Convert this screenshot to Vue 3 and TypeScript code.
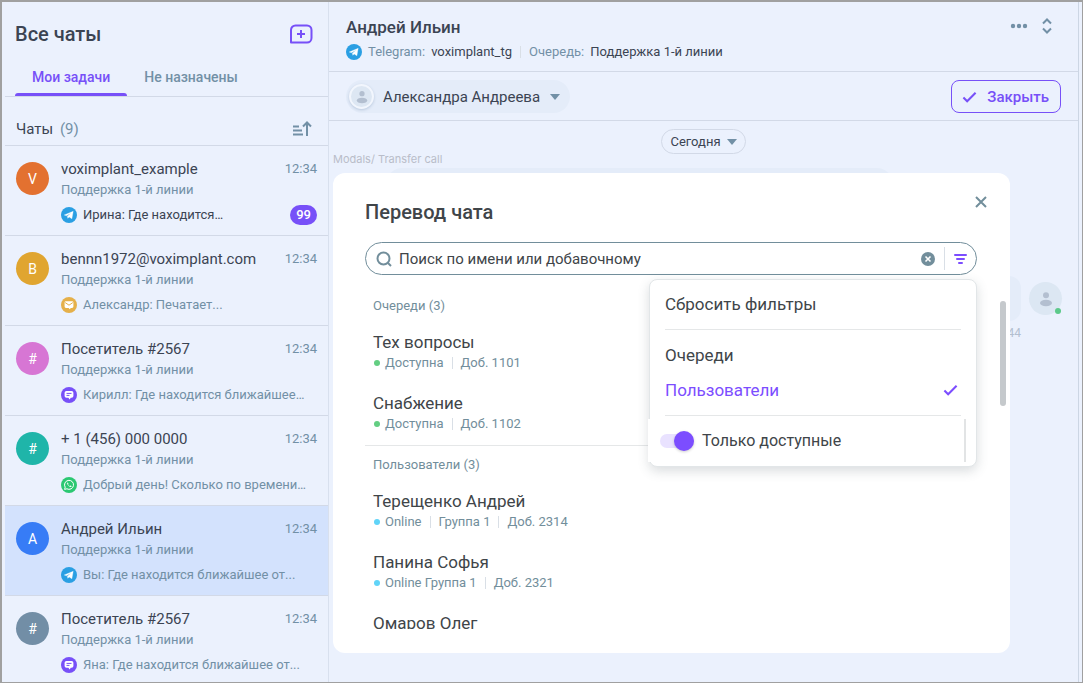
<script setup lang="ts">
import { ref } from 'vue'

type Channel = 'telegram' | 'mail' | 'web' | 'whatsapp'

interface Chat {
  id: number
  letter: string
  tone: string
  name: string
  channel: Channel
  message: string
  unread?: number
  active?: boolean
}

interface Entry {
  name: string
  tone: string
  meta: string[]
}

interface Section {
  title: string
  entries: Entry[]
}

const chats: Chat[] = [
  { id: 1, letter: 'V', tone: 'orange', name: 'voximplant_example', channel: 'telegram', message: 'Ирина: Где находится…', unread: 99 },
  { id: 2, letter: 'B', tone: 'amber', name: 'bennn1972@voximplant.com', channel: 'mail', message: 'Александр: Печатает...' },
  { id: 3, letter: '#', tone: 'pink', name: 'Посетитель #2567', channel: 'web', message: 'Кирилл: Где находится ближайшее…' },
  { id: 4, letter: '#', tone: 'teal', name: '+ 1 (456) 000 0000', channel: 'whatsapp', message: 'Добрый день! Сколько по времени…' },
  { id: 5, letter: 'A', tone: 'blue', name: 'Андрей Ильин', channel: 'telegram', message: 'Вы: Где находится ближайшее от...', active: true },
  { id: 6, letter: '#', tone: 'slate', name: 'Посетитель #2567', channel: 'web', message: 'Яна: Где находится ближайшее от...' },
]

const sections: Section[] = [
  {
    title: 'Очереди (3)',
    entries: [
      { name: 'Тех вопросы', tone: 'green', meta: ['Доступна', 'Доб. 1101'] },
      { name: 'Снабжение', tone: 'green', meta: ['Доступна', 'Доб. 1102'] },
    ],
  },
  {
    title: 'Пользователи (3)',
    entries: [
      { name: 'Терещенко Андрей', tone: 'cyan', meta: ['Online', 'Группа 1', 'Доб. 2314'] },
      { name: 'Панина Софья', tone: 'cyan', meta: ['Online Группа 1', 'Доб. 2321'] },
      { name: 'Омаров Олег', tone: 'cyan', meta: [] },
    ],
  },
]

const query = ref('')
const onlyAvailable = ref(true)
</script>

<template>
  <div class="frame">
    <svg class="defs" width="0" height="0" aria-hidden="true">
      <symbol id="telegram" viewBox="0 0 16 16">
        <circle cx="8" cy="8" r="8" fill="#2a9fe3" />
        <path d="M3.2 8 12.2 4.3 10.9 11.8 8.1 9.9 6.8 11.3 6.4 9.2 10.2 6 5.4 8.8Z" fill="#fff" stroke="#fff" stroke-width=".3" stroke-linejoin="round" />
      </symbol>
      <symbol id="mail" viewBox="0 0 16 16">
        <circle cx="8" cy="8" r="8" fill="#e5b04a" />
        <path d="M5 4.2H11A1.4 1.4 0 0 1 12.4 5.6V9.6A1.4 1.4 0 0 1 11 11H9.8L8.8 12.3 7.6 11H5A1.4 1.4 0 0 1 3.6 9.6V5.6A1.4 1.4 0 0 1 5 4.2Z" fill="#fff" />
        <path d="M4.2 5.6 8 8.2 11.8 5.6" fill="none" stroke="#e5b04a" stroke-width="1" />
      </symbol>
      <symbol id="web" viewBox="0 0 16 16">
        <circle cx="8" cy="8" r="8" fill="#7750f8" />
        <path d="M5.4 4H10.6A1.8 1.8 0 0 1 12.4 5.8V9A1.8 1.8 0 0 1 10.6 10.8H9.8L8.6 12.6 7.4 10.8H5.4A1.8 1.8 0 0 1 3.6 9V5.8A1.8 1.8 0 0 1 5.4 4Z" fill="#fff" />
        <path d="M5.5 6.4H10.5M5.5 8.4H8.5" stroke="#7750f8" stroke-width="1" />
      </symbol>
      <symbol id="whatsapp" viewBox="0 0 16 16">
        <circle cx="8" cy="8" r="8" fill="#2bc872" />
        <path d="M3.6 12.4 4.2 10.2A4.5 4.5 0 1 1 5.9 11.8Z" fill="none" stroke="#fff" stroke-width="1" stroke-linejoin="round" />
        <path d="M6.4 5.6C5.4 6.8 7.6 9.8 9.6 10.1 10.5 10 10.6 9.4 10.5 9L9.3 8.4 8.7 9C7.9 8.7 7.4 8.2 7.1 7.4L7.5 6.9 7 5.7Z" fill="#fff" />
      </symbol>
      <symbol id="person" viewBox="0 0 16 16">
        <circle cx="8" cy="4.2" r="3" />
        <ellipse cx="8" cy="12" rx="6" ry="3.2" />
      </symbol>
      <symbol id="check" viewBox="0 0 16 12">
        <path d="M1.5 6.5 5.5 10.5 14.5 1.5" fill="none" stroke="currentColor" stroke-width="2.2" />
      </symbol>
    </svg>

    <aside class="sidebar">
      <header class="side-head">
        <h1>Все чаты</h1>
        <button class="icon-btn" type="button" aria-label="Новый чат">
          <svg width="24" height="20" viewBox="0 0 24 20" fill="none" stroke="#7750f8" stroke-width="2">
            <path d="M2 18.500V6A4.500 4.500 0 0 1 6.500 1.500H18A4.500 4.500 0 0 1 22.500 6V14A4.500 4.500 0 0 1 18 18.500Z" stroke-linejoin="round" />
            <path d="M12 6V14M8 10H16" />
          </svg>
        </button>
      </header>
      <nav class="tabs">
        <button class="tab current" type="button">Мои задачи</button>
        <button class="tab" type="button">Не назначены</button>
      </nav>
      <div class="list-head">
        <span>Чаты <span class="count">(9)</span></span>
        <button class="icon-btn" type="button" aria-label="Сортировка">
          <svg width="20" height="16" viewBox="0 0 20 16" fill="none" stroke="#7290a6" stroke-width="2">
            <path d="M1 5.500H7M1 9.500H10M1 13.500H11M15 15V2M11 5.500 15 1.500 19 5.500" />
          </svg>
        </button>
      </div>
      <ul class="chats">
        <li v-for="chat in chats" :key="chat.id" class="chat" :class="{ active: chat.active }">
          <span class="avatar" :class="chat.tone">{{ chat.letter }}</span>
          <div class="chat-body">
            <div class="chat-top">
              <span class="chat-name">{{ chat.name }}</span>
              <time>12:34</time>
            </div>
            <div class="chat-queue">Поддержка 1-й линии</div>
            <div class="chat-last" :class="{ fresh: chat.unread }">
              <svg width="16" height="16"><use :href="'#' + chat.channel" /></svg>
              <span class="chat-text">{{ chat.message }}</span>
              <span v-if="chat.unread" class="badge">{{ chat.unread }}</span>
            </div>
          </div>
        </li>
      </ul>
    </aside>

    <main class="main">
      <header class="main-head">
        <div>
          <h2>Андрей Ильин</h2>
          <div class="source">
            <svg width="16" height="16"><use href="#telegram" /></svg>
            <span class="muted">Telegram:</span>
            <span>voximplant_tg</span>
            <i class="bar"></i>
            <span class="muted">Очередь:</span>
            <span>Поддержка 1-й линии</span>
          </div>
        </div>
        <div class="head-actions">
          <button class="icon-btn" type="button" aria-label="Ещё">
            <svg width="18" height="6" viewBox="0 0 18 6" fill="#7290a6">
              <circle cx="3" cy="3" r="2.200" /><circle cx="9" cy="3" r="2.200" /><circle cx="15" cy="3" r="2.200" />
            </svg>
          </button>
          <button class="icon-btn" type="button" aria-label="Развернуть">
            <svg width="10" height="16" viewBox="0 0 10 16" fill="none" stroke="#7290a6" stroke-width="2">
              <path d="M1 5.500 5 1.500 9 5.500M1 10.500 5 14.500 9 10.500" />
            </svg>
          </button>
        </div>
      </header>

      <div class="agent-bar">
        <button class="agent" type="button">
          <span class="agent-pic"><svg width="14" height="14"><use href="#person" /></svg></span>
          Александра Андреева
          <i class="caret"></i>
        </button>
        <button class="close-chat" type="button">
          <svg width="15" height="12"><use href="#check" /></svg>
          Закрыть
        </button>
      </div>

      <section class="talk">
        <button class="day" type="button">Сегодня <i class="caret"></i></button>
        <span class="caption">Modals/ Transfer call</span>
        <div class="bubble-in"></div>
        <div class="bubble-out"></div>
        <time class="sent">12:44</time>
        <span class="me"><svg width="16" height="16"><use href="#person" /></svg></span>

        <div class="modal" role="dialog" aria-labelledby="modal-title">
          <header class="modal-head">
            <h2 id="modal-title">Перевод чата</h2>
            <button class="icon-btn" type="button" aria-label="Закрыть окно">
              <svg width="12" height="12" viewBox="0 0 12 12" stroke="#728e9b" stroke-width="2">
                <path d="M1 1 11 11M11 1 1 11" />
              </svg>
            </button>
          </header>

          <div class="search">
            <svg width="16" height="16" viewBox="0 0 16 16" fill="none" stroke="#728e9b" stroke-width="2">
              <circle cx="7.500" cy="7.500" r="6" /><path d="M11.500 11.500 15 15" />
            </svg>
            <input v-model="query" type="text" placeholder="Поиск по имени или добавочному" aria-label="Поиск по имени или добавочному" />
            <button class="icon-btn" type="button" aria-label="Очистить" @click="query = ''">
              <svg width="14" height="14" viewBox="0 0 14 14">
                <circle cx="7" cy="7" r="7" fill="#728e9b" />
                <path d="M4.500 4.500 9.500 9.500M9.500 4.500 4.500 9.500" stroke="#fff" stroke-width="1.600" />
              </svg>
            </button>
            <i class="bar tall"></i>
            <button class="icon-btn" type="button" aria-label="Фильтры">
              <svg width="13" height="12" viewBox="0 0 13 12" stroke="#7c4dff" stroke-width="2" stroke-linecap="round">
                <path d="M1 2H12M3 6H10M5 10H8" />
              </svg>
            </button>

            <div class="menu">
              <button class="option" type="button">Сбросить фильтры</button>
              <hr />
              <button class="option" type="button">Очереди</button>
              <button class="option chosen" type="button">
                Пользователи
                <svg width="15" height="12"><use href="#check" /></svg>
              </button>
              <hr class="last" />
              <label class="switch">
                <input v-model="onlyAvailable" type="checkbox" />
                Только доступные
              </label>
            </div>
          </div>

          <div class="results">
            <section v-for="section in sections" :key="section.title" class="group">
              <h3>{{ section.title }}</h3>
              <div v-for="entry in section.entries" :key="entry.name" class="entry">
                <div class="entry-name">{{ entry.name }}</div>
                <div v-if="entry.meta.length" class="entry-meta">
                  <i class="dot" :class="entry.tone"></i>
                  <template v-for="(part, index) in entry.meta" :key="part">
                    <i v-if="index" class="bar"></i>
                    <span>{{ part }}</span>
                  </template>
                </div>
              </div>
            </section>
          </div>
          <i class="scroll"></i>
        </div>
      </section>
    </main>
  </div>
</template>

<style>
body {
  margin: 0;
}
</style>

<style scoped>
* {
  box-sizing: border-box;
}

.frame {
  display: flex;
  height: 100vh;
  padding: 0 3px;
  border: 2px solid #a0a0a0;
  border-right-width: 1px;
  border-bottom-width: 1px;
  background: #ebf1fd;
  color: #3b4453;
  font-family: Roboto, "Noto Sans", sans-serif;
  font-size: 14px;
  overflow: hidden;
}

.defs {
  position: absolute;
}

h1,
h2,
h3,
ul {
  margin: 0;
  padding: 0;
}

h1,
h2 {
  font-weight: 500;
}

button {
  display: flex;
  align-items: center;
  margin: 0;
  padding: 0;
  border: 0;
  background: none;
  color: inherit;
  font: inherit;
  cursor: pointer;
}

svg {
  flex: none;
  display: block;
}

.sidebar {
  flex: none;
  display: flex;
  flex-direction: column;
  width: 324px;
  border-right: 1px solid #d8e0ee;
}

.side-head {
  display: flex;
  align-items: center;
  justify-content: space-between;
  height: 63px;
  padding: 0 15px 0 10px;
}

h1 {
  font-size: 20px;
  line-height: 28px;
}

.tabs {
  display: flex;
  height: 32px;
  padding: 0 10px;
  border-bottom: 1px solid #d2d9e7;
}

.tab {
  position: relative;
  padding: 0 17px 7px;
  color: #7290a6;
  font-size: 14px;
  font-weight: 500;
  line-height: 24px;
}

.tab.current {
  color: #7750f8;
}

.tab.current::after {
  content: "";
  position: absolute;
  right: 0;
  bottom: 0;
  left: 0;
  height: 3px;
  border-radius: 3px 3px 0 0;
  background: #7750f8;
}

.list-head {
  display: flex;
  align-items: center;
  justify-content: space-between;
  height: 49px;
  padding: 16px 16px 0 11px;
  border-bottom: 1px solid #d2d9e7;
  font-size: 15px;
}

.count {
  margin-left: 3px;
  color: #7290a6;
}

.chats {
  flex: 1;
  min-height: 0;
  overflow: hidden;
  list-style: none;
}

.chat {
  display: flex;
  gap: 12px;
  height: 90px;
  padding: 13px 11px 0;
  border-bottom: 1px solid #d2d9e7;
}

.chat.active {
  background: #d3e2fd;
}

.avatar {
  flex: none;
  display: grid;
  place-items: center;
  width: 33px;
  height: 33px;
  margin-top: 3px;
  border-radius: 50%;
  color: #fff;
  font-size: 14px;
}

.orange { background: #e37130; }
.amber { background: #e0a530; }
.pink { background: #d776d4; }
.teal { background: #1fb5a9; }
.blue { background: #377cf6; }
.slate { background: #728ea6; }

.chat-body {
  flex: 1;
  min-width: 0;
}

.chat-top {
  display: flex;
  justify-content: space-between;
  line-height: 20px;
}

.chat-name {
  font-size: 15px;
}

time {
  color: #7290a6;
  font-size: 13px;
}

.chat-queue {
  margin-top: 1px;
  color: #7290a6;
  font-size: 13px;
  line-height: 20px;
}

.chat-last {
  display: flex;
  align-items: center;
  gap: 6px;
  margin-top: 5px;
  color: #7290a6;
  font-size: 13px;
  line-height: 20px;
}

.chat-last.fresh {
  color: #3b4453;
}

.chat-text {
  flex: 1;
  overflow: hidden;
  white-space: nowrap;
}

.badge {
  padding: 0 6px;
  border-radius: 10px;
  background: #7750f8;
  color: #fff;
  font-weight: 500;
}

.main {
  flex: 1;
  display: flex;
  flex-direction: column;
  min-width: 0;
  border-right: 1px solid #ccd6e4;
}

.main-head {
  display: flex;
  align-items: flex-start;
  justify-content: space-between;
  height: 70px;
  padding: 13px 26px 0 17px;
  border-bottom: 1px solid #d2d9e7;
}

.main-head h2 {
  font-size: 17px;
  line-height: 24px;
}

.source {
  display: flex;
  align-items: center;
  gap: 6px;
  font-size: 13px;
  line-height: 26px;
}

.muted {
  color: #7290a6;
}

.bar {
  width: 1px;
  height: 12px;
  margin: 0 2px;
  background: #d9dfe6;
}

.head-actions {
  display: flex;
  align-items: center;
  gap: 14px;
  height: 22px;
}

.agent-bar {
  display: flex;
  align-items: center;
  justify-content: space-between;
  height: 49px;
  padding: 1px 17px 0 17px;
  border-bottom: 1px solid #d2d9e7;
}

.agent {
  gap: 9px;
  height: 33px;
  padding: 0 10px 0 3px;
  border-radius: 17px;
  background: #e4ecf9;
  font-size: 15px;
}

.agent-pic {
  display: grid;
  place-items: center;
  width: 25px;
  height: 25px;
  border: 2px solid #f2f6fd;
  border-radius: 50%;
  background: #dde7f3;
  box-shadow: 0 1px 3px #b9c8dd;
  fill: #b3bfd0;
}

.caret {
  width: 0;
  margin-left: 1px;
  border: 5px solid transparent;
  border-top: 6px solid #7290a6;
  border-bottom: 0;
}

.close-chat {
  gap: 10px;
  height: 33px;
  padding: 0 11px 0 10px;
  border: 1px solid #7750f8;
  border-radius: 8px;
  color: #7750f8;
  font-size: 15px;
  font-weight: 500;
}

.talk {
  flex: 1;
  position: relative;
  min-height: 0;
}

.day {
  gap: 5px;
  height: 25px;
  margin: 8px auto 0;
  padding: 0 8px;
  border: 1px solid #d2d9e7;
  border-radius: 13px;
  font-size: 13px;
}

.caption {
  position: absolute;
  top: 31px;
  left: 4px;
  color: #b9bdc9;
  font-family: Inter, sans-serif;
  font-size: 11px;
  line-height: 14px;
}

.bubble-in {
  position: absolute;
  top: 47px;
  right: 185px;
  left: 57px;
  height: 40px;
  border-radius: 16px;
  background: #e4ecf9;
}

.bubble-out {
  position: absolute;
  top: 155px;
  right: 57px;
  width: 100px;
  height: 45px;
  border-radius: 12px;
  background: #e4ecf9;
}

.sent {
  position: absolute;
  top: 205px;
  right: 57px;
  color: #b3bfd0;
  font-size: 12px;
}

.me {
  position: absolute;
  top: 161px;
  right: 16px;
  display: grid;
  place-items: center;
  width: 33px;
  height: 33px;
  border-radius: 50%;
  background: #dce7f3;
  fill: #b3bfd0;
}

.me::after {
  content: "";
  position: absolute;
  right: 1px;
  bottom: 1px;
  width: 6px;
  height: 6px;
  border-radius: 50%;
  background: #5cc98a;
}

.modal {
  position: absolute;
  top: 52px;
  right: 68px;
  bottom: 29px;
  left: 4px;
  display: flex;
  flex-direction: column;
  padding: 22px 33px 24px 32px;
  border-radius: 12px;
  background: #fff;
  color: #404549;
}

.modal-head {
  display: flex;
  align-items: flex-start;
  justify-content: space-between;
  margin-right: -10px;
  margin-bottom: 13px;
}

.modal-head h2 {
  font-size: 20px;
  line-height: 34px;
}

.modal-head .icon-btn {
  padding: 1px 0;
}

.search {
  position: relative;
  display: flex;
  align-items: center;
  gap: 7px;
  height: 33px;
  padding: 0 9px 0 10px;
  border: 1px solid #728e9b;
  border-radius: 17px;
}

.search input[type="text"] {
  flex: 1;
  min-width: 0;
  padding: 0;
  border: 0;
  outline: 0;
  background: none;
  color: #404549;
  font: inherit;
  font-size: 15px;
}

.search input::placeholder {
  color: #404549;
  opacity: 1;
}

.bar.tall {
  height: 23px;
}

.menu {
  position: absolute;
  top: 36px;
  right: -1px;
  z-index: 1;
  width: 328px;
  padding: 7px 15px 4px;
  border: 1px solid #e2e6e8;
  border-radius: 8px;
  background: #fff;
  box-shadow: 0 4px 12px #404f5a33;
  font-size: 17px;
}

.option {
  justify-content: space-between;
  width: 100%;
  height: 35px;
  padding: 0 3px 2px 0;
}

.option.chosen {
  color: #7c4dff;
}

hr {
  height: 1px;
  margin: 7px 0 8px;
  border: 0;
  background: #e5e7e8;
}

hr.last {
  margin-bottom: 3px;
}

.switch {
  display: flex;
  align-items: center;
  gap: 8px;
  height: 43px;
  margin: 0 -5px 0 -17px;
  padding-left: 12px;
  border-right: 2px solid #e2e4e5;
  background: #fff;
  font-size: 16px;
}

.switch input {
  position: relative;
  flex: none;
  width: 34px;
  height: 14px;
  margin: 0;
  border-radius: 7px;
  background: #e9e2ff;
  appearance: none;
}

.switch input::after {
  content: "";
  position: absolute;
  top: -3px;
  left: 0;
  width: 20px;
  height: 20px;
  border-radius: 50%;
  background: #90a4ae;
  box-shadow: 0 1px 3px #0003;
}

.switch input:checked::after {
  left: 14px;
  background: #7c4dff;
}

.results {
  flex: 1;
  min-height: 0;
  padding-top: 12px;
  overflow: hidden;
}

.group {
  padding: 8px 0 8px 8px;
}

.group + .group {
  border-top: 1px solid #e5e7e8;
}

h3 {
  color: #728e9b;
  font-size: 13px;
  font-weight: 400;
  line-height: 22px;
}

.entry {
  height: 61px;
  padding-top: 15px;
}

h3 + .entry {
  height: 59px;
  padding-top: 13px;
}

.entry-name {
  font-size: 17px;
  line-height: 24px;
}

.entry-meta {
  display: flex;
  align-items: center;
  gap: 5px;
  color: #728e9b;
  font-size: 13px;
  line-height: 18px;
}

.entry-meta .bar {
  margin: 0 3px;
}

.dot {
  width: 6px;
  height: 6px;
  margin-left: 1px;
  border-radius: 50%;
}

.green { background: #63ce82; }
.cyan { background: #60d4f8; }

.scroll {
  position: absolute;
  top: 128px;
  right: 4px;
  width: 6px;
  height: 105px;
  border-radius: 3px;
  background: #c5c9cc;
}
</style>
